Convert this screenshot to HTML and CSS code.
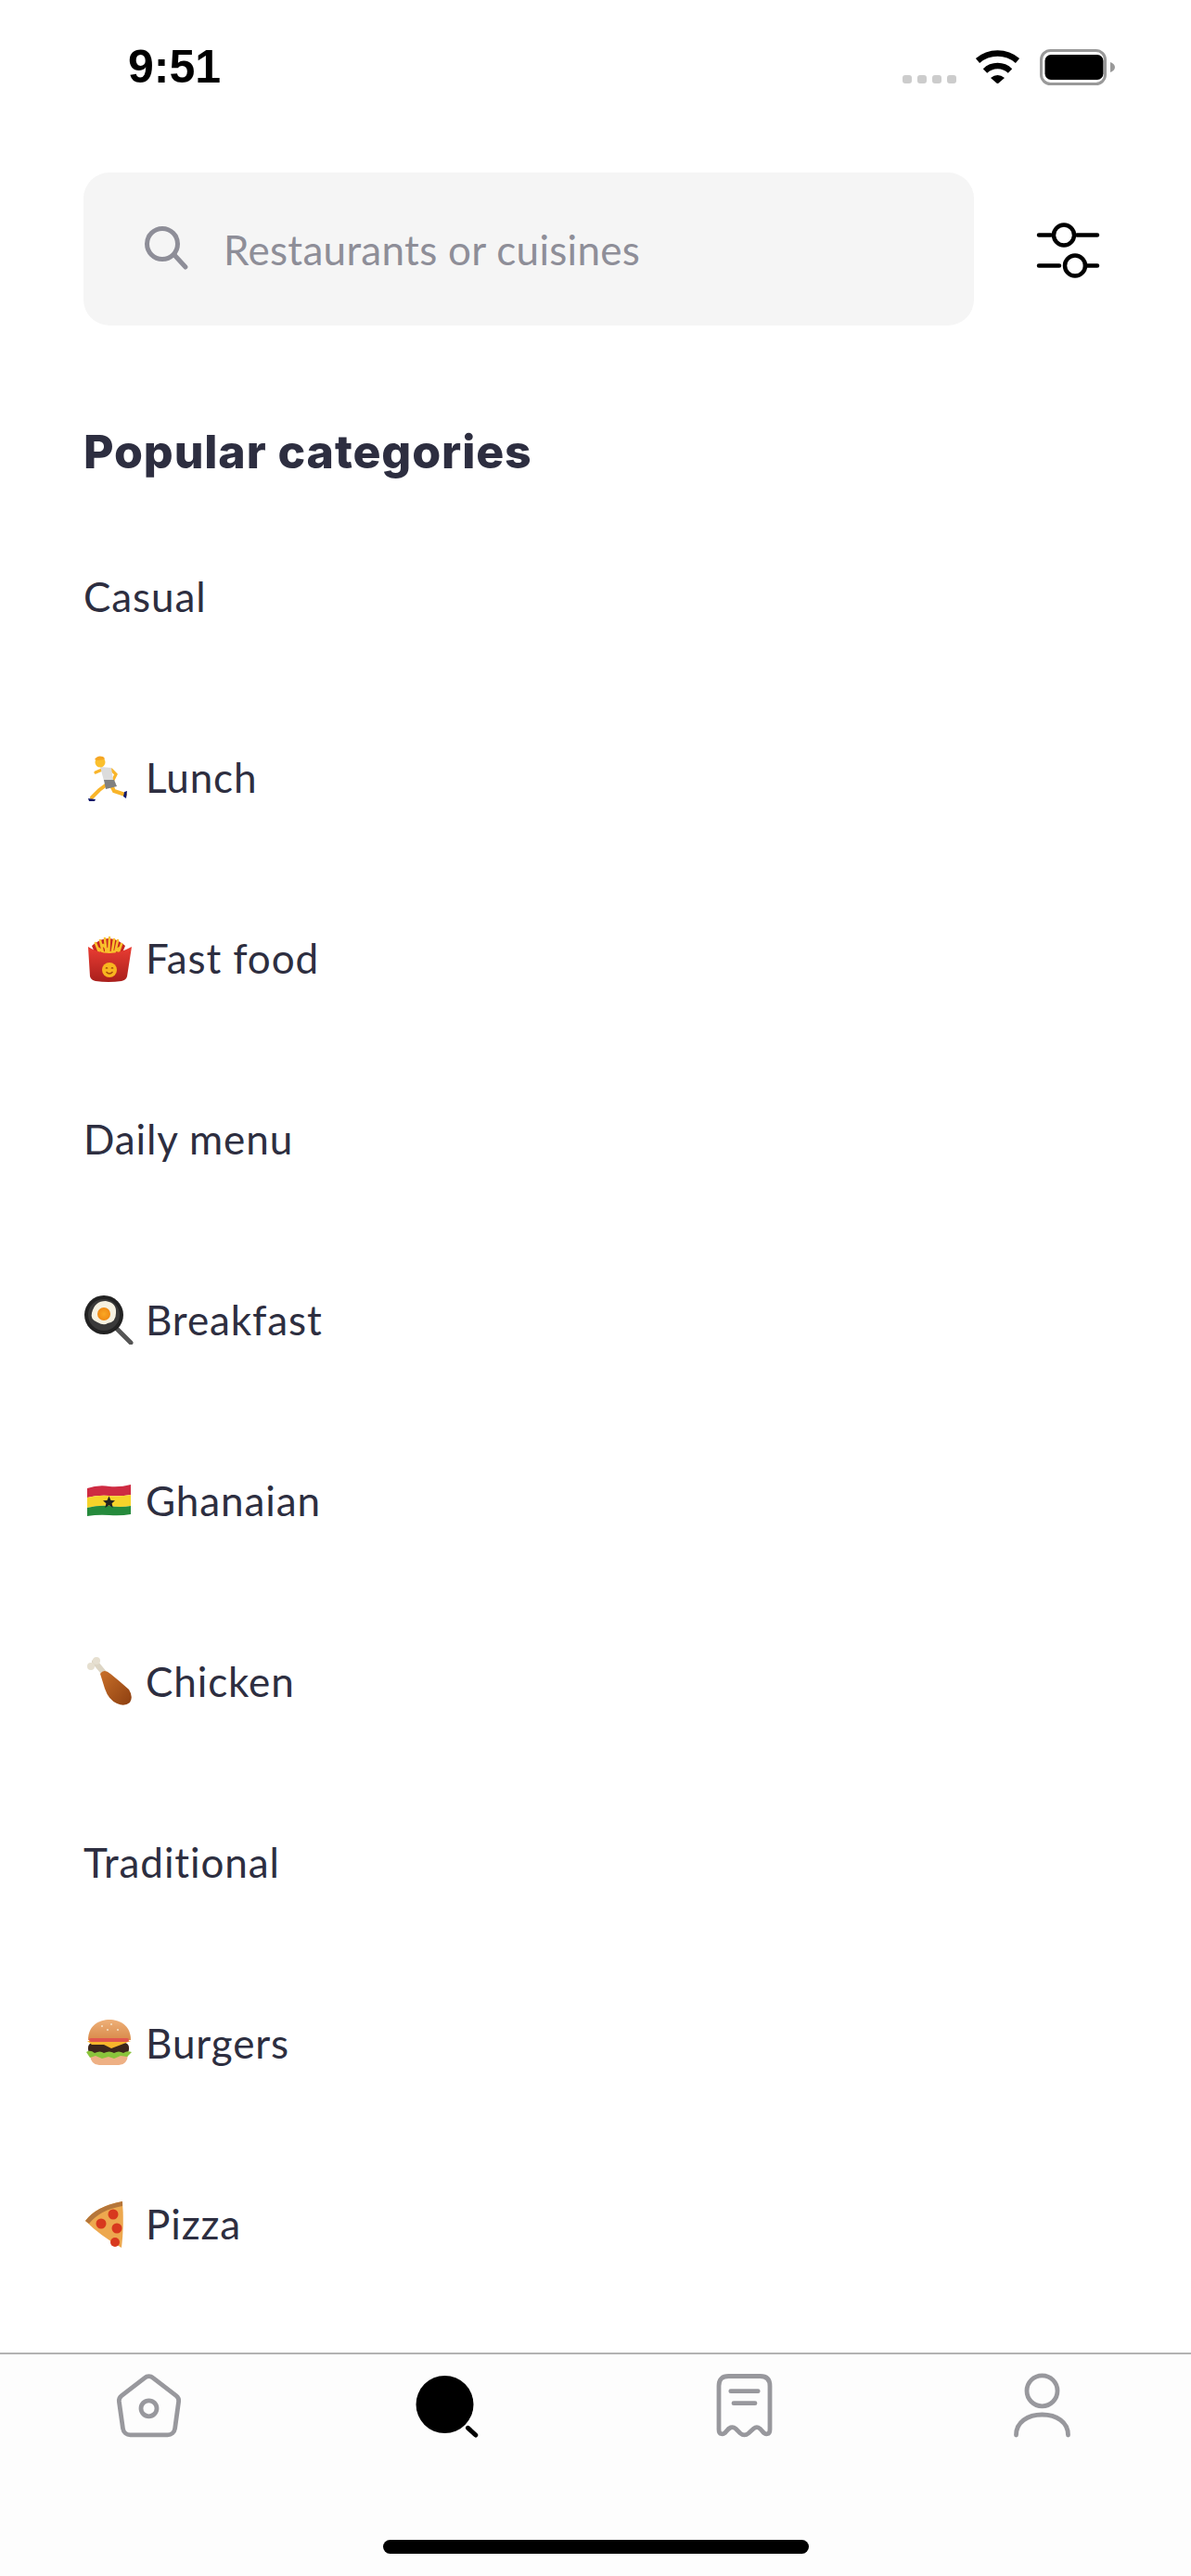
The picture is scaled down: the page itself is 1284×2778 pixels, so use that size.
FILE: index.html
```html
<!DOCTYPE html>
<html lang="en">
<head>
<meta charset="utf-8">
<title>Search</title>
<link rel="stylesheet" href="styles.css">
</head>
<body>
<div class="screen">
  <header class="status">
    <span class="time">9:51</span>
    <div class="status-icons">
      <div class="signal"><i></i><i></i><i></i><i></i></div>
      <svg class="wifi" viewBox="0 0 49 37" width="49" height="37">
        <path d="M3 12.5A33 33 0 0 1 46 12.5" fill="none" stroke="#000" stroke-width="6.4"/>
        <path d="M11 23.5A19.5 19.5 0 0 1 38 23.5" fill="none" stroke="#000" stroke-width="6.4"/>
        <path d="M17 31Q24.500 25 32 31L24.500 37.500Z" fill="#000"/>
      </svg>
      <svg class="battery" viewBox="0 0 81 39" width="81" height="39">
        <rect x="1.500" y="1.500" width="69" height="36" rx="10" fill="none" stroke="#999" stroke-width="3"/>
        <rect x="5.500" y="6" width="63" height="27" rx="6.500" fill="#000"/>
        <path d="M76 14C79 15 81 17 81 19.500C81 22 79 24 76 25Z" fill="#999"/>
      </svg>
    </div>
  </header>

  <div class="search-row">
    <div class="search-box">
      <svg class="search-glyph" viewBox="0 0 56 56" width="56" height="56">
        <circle cx="25" cy="24" r="16.500" fill="none" stroke="#8e8e98" stroke-width="5"/>
        <path d="M38 36L50 49" fill="none" stroke="#8e8e98" stroke-width="5" stroke-linecap="round"/>
      </svg>
      <span class="placeholder">Restaurants or cuisines</span>
    </div>
    <svg class="filter" viewBox="0 0 72 72" width="72" height="72">
      <g fill="none" stroke="#000" stroke-width="4.500" stroke-linecap="round">
        <path d="M3 20.500H16M44 20.500H66"/>
        <circle cx="30" cy="20.500" r="11"/>
        <path d="M3 53.500H25M53 53.500H66"/>
        <circle cx="42" cy="53.500" r="11"/>
      </g>
    </svg>
  </div>

  <main class="content">
    <h1 class="title">Popular categories</h1>
    <ul class="list">
      <li class="row"><span>Casual</span></li>
      <li class="row">
        <svg class="emoji" viewBox="0 0 54 54" width="54" height="54">
          <path d="M25 35L17 41L9 49" fill="none" stroke="#f9b52a" stroke-width="4" stroke-linecap="round"/>
          <path d="M30 36L33 42L45 46" fill="none" stroke="#f9b52a" stroke-width="4" stroke-linecap="round"/>
          <path d="M5 50L13 51L12 53L6 53Z" fill="#10186b"/>
          <path d="M44 43L47 42L46 50L43 48Z" fill="#10186b"/>
          <path d="M20 19L13 22M30 19L35 24L32 30" fill="none" stroke="#f9b52a" stroke-width="3.200" stroke-linecap="round"/>
          <path d="M18 16L30 17L32 30L22 31Z" fill="#dcdcdc"/>
          <path d="M22 30L33 30L36 37L24 40Z" fill="#808080"/>
          <circle cx="18" cy="11" r="5.500" fill="#fbc02d"/>
          <path d="M12 8Q15 3 21 5Q24 7 22 8L15 9Z" fill="#f5a623"/>
        </svg>
        <span>Lunch</span>
      </li>
      <li class="row">
        <svg class="emoji" viewBox="0 0 54 54" width="54" height="54">
          <defs><linearGradient id="box" x1="0" y1="0" x2="0" y2="1"><stop offset="0" stop-color="#ea3d33"/><stop offset="1" stop-color="#a91f1c"/></linearGradient></defs>
          <path d="M9 14Q27 -2 45 14L40 26H14Z" fill="#c7261f"/>
          <g stroke="#f9c02c" stroke-width="2.600" stroke-linecap="round">
            <path d="M13 11L19 26M18 8L22 26M23 6L25 26M28 5L27 26M33 7L30 26M37 8L33 26M41 12L36 26M15 16L28 26M39 16L26 26M21 13L33 26"/>
          </g>
          <path d="M5 15Q27 29 52 15L47 47Q46 51 41 52Q27 54 13 52Q8 51 7 47Z" fill="url(#box)"/>
          <circle cx="28" cy="40" r="8" fill="#f8b51f"/>
          <path d="M24 38.500Q25 37 26 38.500M30 38.500Q31 37 32 38.500M24.500 42Q28 46 31.500 42" fill="none" stroke="#a6480a" stroke-width="1.300"/>
        </svg>
        <span>Fast food</span>
      </li>
      <li class="row"><span>Daily menu</span></li>
      <li class="row">
        <svg class="emoji" viewBox="0 0 54 54" width="54" height="54">
          <defs><radialGradient id="yolk"><stop offset="0" stop-color="#f9a825"/><stop offset="1" stop-color="#f08a12"/></radialGradient></defs>
          <path d="M35 36L51 52" stroke="#555" stroke-width="5" stroke-linecap="round"/>
          <circle cx="22" cy="22" r="21" fill="#222"/>
          <circle cx="22" cy="22" r="17" fill="#3a3a3a"/>
          <path d="M9 20Q12 7 24 7Q36 9 35 20Q35 30 26 31Q22 34 15 30Q7 27 9 20Z" fill="#f6f1e1"/>
          <circle cx="22" cy="21" r="7" fill="url(#yolk)"/>
        </svg>
        <span>Breakfast</span>
      </li>
      <li class="row">
        <svg class="emoji" viewBox="0 0 54 54" width="54" height="54">
          <path d="M4 14Q16 10 28 12Q40 13 51 10V21Q40 23 28 22Q16 21 4 24Z" fill="#ce2b42"/>
          <path d="M4 24Q16 21 28 22Q40 23 51 21V33Q40 35 28 33Q16 32 4 35Z" fill="#f6d32a"/>
          <path d="M4 35Q16 32 28 33Q40 35 51 33V42Q40 44 28 43Q16 42 4 44Z" fill="#258a3c"/>
          <path d="M27.500 22.500L29.500 27L34 27.300L30.600 30.200L31.700 35L27.500 32.300L23.300 35L24.400 30.200L21 27.300L25.500 27Z" fill="#222"/>
        </svg>
        <span>Ghanaian</span>
      </li>
      <li class="row">
        <svg class="emoji" viewBox="0 0 54 54" width="54" height="54">
          <defs><linearGradient id="leg" x1="0" y1="0" x2="1" y2="1"><stop offset="0" stop-color="#c9702a"/><stop offset="1" stop-color="#8d3f10"/></linearGradient></defs>
          <path d="M12 6L22 18" stroke="#ddd5c4" stroke-width="6" stroke-linecap="round"/>
          <circle cx="8" cy="11" r="4" fill="#e6dfd0"/>
          <circle cx="14" cy="5" r="4" fill="#e6dfd0"/>
          <path d="M18 19Q22 13 29 19Q39 27 49 36Q54 44 50 50Q44 55 36 51Q27 47 23 35Z" fill="url(#leg)"/>
        </svg>
        <span>Chicken</span>
      </li>
      <li class="row"><span>Traditional</span></li>
      <li class="row">
        <svg class="emoji" viewBox="0 0 54 54" width="54" height="54">
          <defs><linearGradient id="bun" x1="0" y1="0" x2="0" y2="1"><stop offset="0" stop-color="#eeb078"/><stop offset="1" stop-color="#d88a4a"/></linearGradient></defs>
          <path d="M5 24C5 8 17 2 28 2C39 2 51 8 51 24Z" fill="url(#bun)"/>
          <path d="M7 40Q8 51 17 51H38Q47 51 48 40Z" fill="#eeb084"/>
          <rect x="5" y="27" width="44" height="12" rx="5" fill="#3c261c"/>
          <path d="M3 37Q7 34 12 38Q18 35 22 38Q28 35 33 38Q38 35 43 38Q47 35 52 37L47 42L40 41L33 44L27 42L20 44L13 41L7 43Z" fill="#8ac43b"/>
          <path d="M4 25H51L38 30L30 33L22 29L9 29Z" fill="#f7b52c"/>
          <rect x="6" y="22" width="43" height="4" rx="2" fill="#e2554d"/>
          <g fill="#f3e3c8"><circle cx="20" cy="9" r="1"/><circle cx="30" cy="7" r="1"/><circle cx="37" cy="13" r="1"/><circle cx="26" cy="13" r="1"/></g>
        </svg>
        <span>Burgers</span>
      </li>
      <li class="row">
        <svg class="emoji" viewBox="0 0 54 54" width="54" height="54">
          <path d="M2 24Q14 8 42 3Q44 28 41 53Q18 40 2 24Z" fill="#eda84e"/>
          <path d="M2 24Q14 8 42 3L42 8Q18 12 6 27Z" fill="#b5763a"/>
          <g fill="#d8391e"><circle cx="32" cy="17" r="5.500"/><circle cx="19" cy="27" r="5.500"/><circle cx="36" cy="32" r="5.500"/><circle cx="34" cy="47" r="5"/></g>
        </svg>
        <span>Pizza</span>
      </li>
    </ul>
  </main>

  <nav class="tabbar">
    <div class="tabs">
      <svg class="tab" viewBox="0 0 72 72" width="72" height="72">
        <g fill="none" stroke="#98989d" stroke-width="4.800">
          <path d="M31 5.400a7 7 0 0 1 9 0L65 24.600a7 7 0 0 1 2.600 6.300L63.600 60a8 8 0 0 1-8 6.800H15.500a8 8 0 0 1-8-6.800L3.400 30.900a7 7 0 0 1 2.600-6.300Z"/>
          <circle cx="35.500" cy="38.300" r="8.500"/>
        </g>
      </svg>
      <svg class="tab" viewBox="0 0 72 72" width="72" height="72">
        <circle cx="33.500" cy="34" r="31" fill="#000"/>
        <path d="M58.500 59.300L66.800 67" stroke="#000" stroke-width="5" stroke-linecap="round"/>
      </svg>
      <svg class="tab" viewBox="0 0 72 72" width="72" height="72">
        <g fill="none" stroke="#98989d" stroke-width="4.800" stroke-linecap="round">
          <path d="M8 14Q8 3.500 18.500 3.500H52.500Q63 3.500 63 14V61C63 67 58 67 55 63C52 59 49 57 45.500 60L40 65C37 67.500 34 67.500 31 65L26 60C22.500 57 19 59 16 63C13 67 8 67 8 61Z"/>
          <path d="M20.800 19.700H50.200M24 32.700H47"/>
        </g>
      </svg>
      <svg class="tab" viewBox="0 0 72 72" width="72" height="72">
        <g fill="none" stroke="#98989d" stroke-width="4.800" stroke-linecap="round">
          <circle cx="35.500" cy="19.300" r="16.500"/>
          <path d="M7.500 67C7.500 53 20 45 35.500 45C51 45 63.500 53 63.500 67"/>
        </g>
      </svg>
    </div>
    <div class="home-bar"></div>
  </nav>
</div>
</body>
</html>
```
FILE: styles.css
```css
* { box-sizing: border-box; }
html, body { margin: 0; padding: 0; background: #fff; }
body { font-family: "Lato", "Liberation Sans", sans-serif; color: #2d2e40; }

.screen {
  width: 1284px;
  height: 2778px;
  display: flex;
  flex-direction: column;
  overflow: hidden;
}

/* status bar */
.status {
  height: 110px;
  flex: none;
  display: flex;
  justify-content: space-between;
  align-items: flex-start;
  padding: 42px 82px 0 138px;
}
.time {
  font-family: "Liberation Sans", sans-serif;
  font-weight: 700;
  font-size: 50px;
  line-height: 60px;
  color: #000;
}
.status-icons {
  display: flex;
  align-items: flex-start;
  padding-top: 11px;
}
.signal { display: flex; gap: 6px; margin: 28px 20px 0 0; }
.signal i { width: 10px; height: 9px; border-radius: 3px; background: #ccc; }
.wifi { margin-right: 21px; display: block; }
.battery { display: block; }

/* search */
.search-row {
  flex: none;
  margin-top: 76px;
  padding-left: 90px;
  display: flex;
  align-items: center;
}
.search-box {
  width: 960px;
  height: 165px;
  border-radius: 28px;
  background: #f5f5f5;
  display: flex;
  align-items: center;
  padding-left: 60px;
}
.search-glyph { flex: none; margin-top: -4px; }
.placeholder {
  margin-left: 35px;
  font-size: 44px;
  letter-spacing: 0.3px;
  color: #8e8e98;
}
.filter { margin-left: 67px; flex: none; }

/* list */
.content { flex: 1; min-height: 0; }
.title {
  margin: 106px 0 28px 90px;
  font-family: "Inter", "Liberation Sans", sans-serif;
  font-size: 50px;
  line-height: 60px;
  font-weight: 800;
  letter-spacing: 0.9px;
}
.list { list-style: none; margin: 0; padding: 0 0 0 90px; }
.row {
  height: 195px;
  display: flex;
  align-items: center;
  font-size: 44px;
  letter-spacing: 0.9px;
}
.emoji { flex: none; margin-right: 13px; }

/* tab bar */
.tabbar {
  flex: none;
  height: 241px;
  border-top: 2px solid #b3b3b3;
  background: #fdfdfd;
  padding-top: 20px;
}
.tabs {
  display: grid;
  grid-template-columns: repeat(4, 1fr);
  justify-items: center;
}
.tab { display: block; }
.home-bar {
  width: 459px;
  height: 15px;
  margin: 108px auto 0;
  border-radius: 8px;
  background: #000;
}
```
